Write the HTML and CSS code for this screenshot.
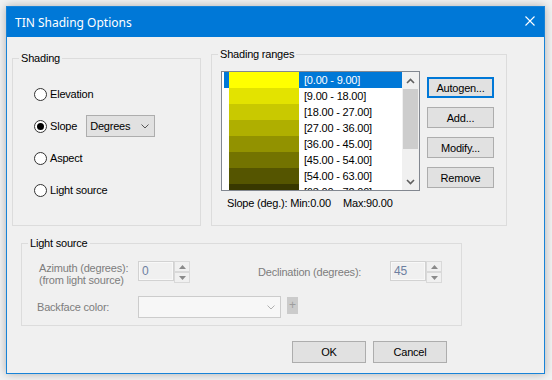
FILE: index.html
```html
<!DOCTYPE html>
<html>
<head>
<meta charset="utf-8">
<link rel="stylesheet" href="styles.css">
</head>
<body>
<div class="window">
  <div class="titlebar">
    <span class="title">TIN Shading Options</span>
    <svg class="close" width="10" height="10" viewBox="0 0 10 10"><path d="M0.5 0.5 L9.5 9.5 M9.5 0.5 L0.5 9.5" stroke="#fff" stroke-width="1.1" fill="none"/></svg>
  </div>
  <div class="content">
    <div class="top-row">
      <fieldset class="group shading">
        <legend>Shading</legend>
        <div class="radio-list">
          <div class="radio-row"><span class="radio"></span><span>Elevation</span></div>
          <div class="radio-row"><span class="radio checked"></span><span>Slope</span>
            <div class="combo"><span>Degrees</span><svg width="8" height="5" viewBox="0 0 8 5"><polyline points="0.5,0.5 4,4 7.5,0.5" stroke="#555" fill="none"/></svg></div>
          </div>
          <div class="radio-row"><span class="radio"></span><span>Aspect</span></div>
          <div class="radio-row"><span class="radio"></span><span>Light source</span></div>
        </div>
      </fieldset>
      <fieldset class="group ranges">
        <legend>Shading ranges</legend>
        <div class="ranges-body">
          <div class="ranges-left">
            <div class="listbox">
              <div class="list-items">
                <div class="item selected"><span class="swatch" style="background:#ffff00"></span><span class="item-text">[0.00 - 9.00]</span></div>
                <div class="item"><span class="swatch" style="background:#e3e300"></span><span class="item-text">[9.00 - 18.00]</span></div>
                <div class="item"><span class="swatch" style="background:#c9c900"></span><span class="item-text">[18.00 - 27.00]</span></div>
                <div class="item"><span class="swatch" style="background:#afaf00"></span><span class="item-text">[27.00 - 36.00]</span></div>
                <div class="item"><span class="swatch" style="background:#929200"></span><span class="item-text">[36.00 - 45.00]</span></div>
                <div class="item"><span class="swatch" style="background:#737300"></span><span class="item-text">[45.00 - 54.00]</span></div>
                <div class="item"><span class="swatch" style="background:#555500"></span><span class="item-text">[54.00 - 63.00]</span></div>
                <div class="item"><span class="swatch" style="background:#383800"></span><span class="item-text">[63.00 - 72.00]</span></div>
              </div>
              <div class="scrollbar">
                <div class="sb-btn"><svg width="9" height="6" viewBox="0 0 9 6"><polyline points="1,5 4.5,1.5 8,5" stroke="#606060" stroke-width="1.6" fill="none"/></svg></div>
                <div class="sb-track"><div class="sb-thumb"></div></div>
                <div class="sb-btn"><svg width="9" height="6" viewBox="0 0 9 6"><polyline points="1,1 4.5,4.5 8,1" stroke="#606060" stroke-width="1.6" fill="none"/></svg></div>
              </div>
            </div>
            <div class="minmax"><span class="min">Slope (deg.): Min:0.00</span><span>Max:90.00</span></div>
          </div>
          <div class="btn-col">
            <button class="btn default">Autogen...</button>
            <button class="btn">Add...</button>
            <button class="btn">Modify...</button>
            <button class="btn">Remove</button>
          </div>
        </div>
      </fieldset>
    </div>
    <fieldset class="group light">
      <legend>Light source</legend>
      <div class="light-body">
        <div class="dis-label two-line">Azimuth (degrees):<br>(from light source)</div>
        <div class="spin">
          <div class="spin-input">0</div>
          <div class="spin-btns">
            <div class="spin-btn"><svg width="7" height="4" viewBox="0 0 7 4"><polygon points="0,4 3.5,0 7,4" fill="#8a8a8a"/></svg></div>
            <div class="spin-btn"><svg width="7" height="4" viewBox="0 0 7 4"><polygon points="0,0 3.5,4 7,0" fill="#8a8a8a"/></svg></div>
          </div>
        </div>
        <div class="dis-label center">Declination (degrees):</div>
        <div class="spin">
          <div class="spin-input">45</div>
          <div class="spin-btns">
            <div class="spin-btn"><svg width="7" height="4" viewBox="0 0 7 4"><polygon points="0,4 3.5,0 7,4" fill="#8a8a8a"/></svg></div>
            <div class="spin-btn"><svg width="7" height="4" viewBox="0 0 7 4"><polygon points="0,0 3.5,4 7,0" fill="#8a8a8a"/></svg></div>
          </div>
        </div>
        <div class="dis-label center backface">Backface color:</div>
        <div class="color-row">
          <div class="dis-combo"><svg width="8" height="5" viewBox="0 0 8 5"><polyline points="0.5,0.5 4,4 7.5,0.5" stroke="#b0b0b0" fill="none"/></svg></div>
          <div class="plus-btn">+</div>
        </div>
      </div>
    </fieldset>
    <div class="dialog-buttons">
      <button class="btn wide">OK</button>
      <button class="btn wide">Cancel</button>
    </div>
  </div>
</div>
</body>
</html>
```

FILE: styles.css
```css
* { box-sizing: border-box; }
html, body { margin: 0; padding: 0; }
body {
  width: 552px;
  height: 380px;
  overflow: hidden;
  background: #f2f2f2;
  font-family: "Liberation Sans", Arial, sans-serif;
  font-size: 11px;
  letter-spacing: -0.2px;
  color: #000;
}
.window {
  margin: 6px 0 0 6px;
  width: 539px;
  height: 368px;
  border: 1px solid #1883d7;
  background: #f0f0f0;
  box-shadow: 0 0 9px rgba(0, 0, 0, 0.28);
  display: flex;
  flex-direction: column;
}
.titlebar {
  height: 30px;
  flex: none;
  background: #0078d7;
  color: #fff;
  display: flex;
  align-items: center;
  justify-content: space-between;
  padding: 0 9px 0 8px;
  font-family: "Segoe UI", "Noto Sans", sans-serif;
  font-size: 12px;
  letter-spacing: 0;
}
.close { display: block; margin-top: -2px; }
.content {
  padding: 11px 0 0 5px;
}
.top-row {
  display: flex;
  gap: 10px;
  height: 178px;
}
fieldset.group {
  margin: 0;
  padding: 0;
  border: 1px solid #dcdcdc;
  min-width: 0;
}
legend {
  padding: 0 2px;
  margin-left: 6px;
  line-height: 13px;
  font-size: 11px;
}
fieldset.shading {
  width: 189px;
  margin-top: 4px;
}
.radio-list {
  display: flex;
  flex-direction: column;
  gap: 10px;
  padding: 18px 0 0 21px;
}
.radio-row {
  display: flex;
  align-items: center;
  height: 22px;
}
.radio {
  width: 13px;
  height: 13px;
  border: 1px solid #333;
  border-radius: 50%;
  background: #fff;
  margin-right: 3px;
  display: flex;
  align-items: center;
  justify-content: center;
}
.radio.checked::after {
  content: "";
  width: 7px;
  height: 7px;
  border-radius: 50%;
  background: #000;
}
.combo {
  width: 69px;
  height: 22px;
  margin-left: 9px;
  border: 1px solid #adadad;
  background: #e1e1e1;
  display: flex;
  align-items: center;
  justify-content: space-between;
  padding: 0 5px 0 3px;
}
fieldset.ranges {
  width: 296px;
}
.ranges-body {
  display: flex;
  gap: 7px;
  padding: 10px 0 0 9px;
}
.listbox {
  width: 199px;
  height: 120px;
  border: 1px solid #828790;
  background: #fff;
  display: flex;
}
.list-items {
  flex: 1;
  overflow: hidden;
}
.item {
  display: flex;
  align-items: center;
  height: 16px;
  margin-left: 2px;
  padding-left: 5px;
  white-space: nowrap;
}
.item.selected {
  background: #0078d7;
  color: #fff;
}
.swatch {
  width: 70px;
  height: 16px;
  flex: none;
}
.item-text {
  padding-left: 5px;
}
.scrollbar {
  width: 17px;
  display: flex;
  flex-direction: column;
  background: #f0f0f0;
}
.sb-btn {
  height: 17px;
  display: flex;
  align-items: center;
  justify-content: center;
}
.sb-track { flex: 1; }
.sb-thumb {
  height: 60px;
  margin: 0 1px;
  background: #cdcdcd;
}
.minmax {
  margin-top: 6px;
  padding-left: 6px;
  line-height: 13px;
  display: flex;
}
.minmax .min { width: 116px; }
.btn-col {
  display: flex;
  flex-direction: column;
  gap: 9px;
  margin-top: 6px;
}
.btn {
  width: 67px;
  height: 21px;
  padding: 0;
  border: 1px solid #adadad;
  background: #e1e1e1;
  font-family: "Liberation Sans", Arial, sans-serif;
  font-size: 11px;
  letter-spacing: -0.2px;
  color: #000;
}
.btn.default {
  border: 2px solid #0078d7;
}
fieldset.light {
  width: 441px;
  margin: 11px 0 0 9px;
}
.light-body {
  display: grid;
  grid-template-columns: 99px 120px 132px auto;
  grid-template-rows: 22px 22px;
  row-gap: 13px;
  padding: 11px 0 7px 17px;
}
.dis-label {
  color: #7d7d7d;
  line-height: 12px;
  white-space: nowrap;
}
.two-line { padding-top: 1px; }
.center { align-self: center; }
.backface { margin-left: -2px; }
.spin {
  display: flex;
}
.spin-input {
  width: 36px;
  height: 20px;
  border: 1px solid #d2d2d2;
  box-shadow: inset 0 0 0 1px #f8f8f8;
  background: #f0f0f0;
  color: #6d7fa0;
  font-size: 12px;
  line-height: 18px;
  padding-left: 3px;
}
.spin-btns {
  width: 16px;
  display: flex;
  flex-direction: column;
}
.spin-btn {
  height: 11px;
  border: 1px solid #d9d9d9;
  background: #f0f0f0;
  display: flex;
  align-items: center;
  justify-content: center;
}
.color-row {
  grid-column: 2 / 5;
  display: flex;
  align-items: flex-start;
  gap: 6px;
}
.dis-combo {
  width: 143px;
  height: 22px;
  border: 1px solid #cccccc;
  background: #f7f7f7;
  display: flex;
  align-items: center;
  justify-content: flex-end;
  padding-right: 5px;
}
.plus-btn {
  width: 11px;
  height: 17px;
  margin-top: 1px;
  background: #cbcbcb;
  color: #9d9d9d;
  font-size: 12px;
  line-height: 16px;
  text-align: center;
}
.dialog-buttons {
  display: flex;
  justify-content: flex-end;
  gap: 7px;
  margin-top: 15px;
  padding-right: 97px;
}
.btn.wide {
  width: 74px;
  height: 22px;
}
```
